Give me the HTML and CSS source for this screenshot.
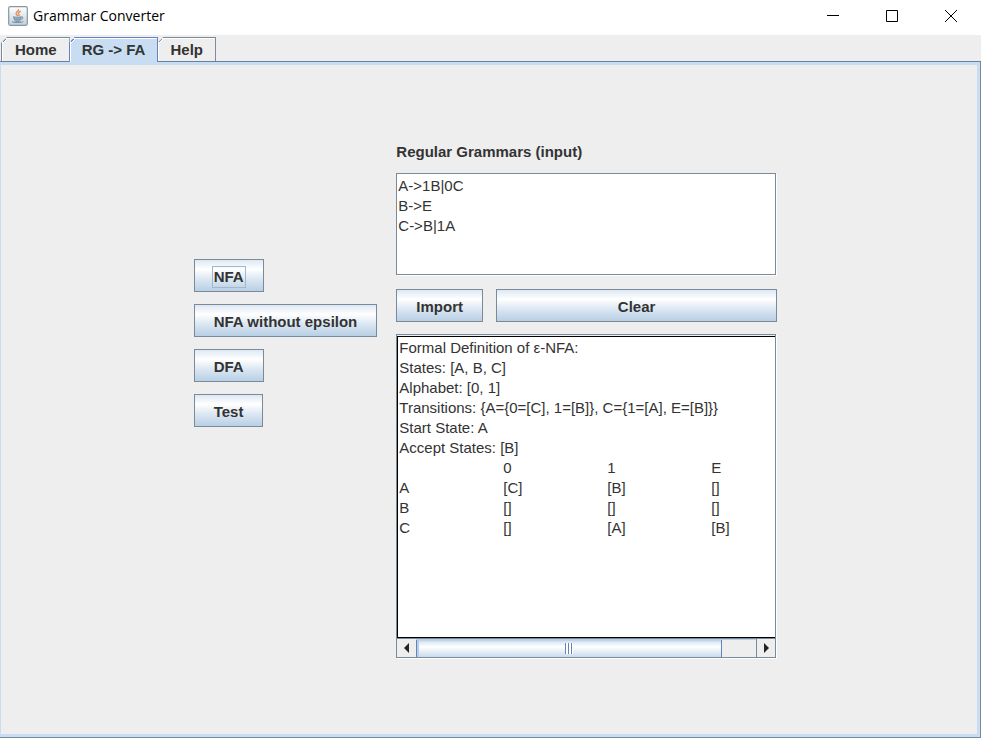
FILE: index.html
```html
<!DOCTYPE html>
<html lang="en">
<head>
<meta charset="utf-8">
<title>Grammar Converter</title>
<link rel="stylesheet" href="styles.css">
</head>
<body>
<div class="window">
  <header class="titlebar">
    <svg class="app-icon" viewBox="0 0 20 20" aria-hidden="true">
      <defs><linearGradient id="tile" x1="0" y1="0" x2="0" y2="1"><stop offset="0" stop-color="#fff"/><stop offset="1" stop-color="#c3d0da"/></linearGradient></defs>
      <rect x=".7" y=".7" width="18.6" height="18.6" rx="1.5" fill="url(#tile)" stroke="#8496a4" stroke-width="1.2"/>
      <path d="M10.500 3c1 2-3.500 3.200-2.300 5.100.4.800 1.300 1.300 1.400 2M12.800 5.200c-2.300 1-3 1.800-2 3 .6.700.2 1.300-.4 1.800" fill="none" stroke="#e58a52" stroke-width="1.300"/>
      <path d="M5.500 10.700c2 .7 5.600.7 7.600 0l-.6 2.800c-.2 1-6 1-6.300 0z" fill="#8da7bb" stroke="#6b8aa3" stroke-width=".8"/>
      <path d="M13.200 11c2.600-.6 2.300 2.200-.5 2.500M4.300 15.200c-1.500 1.800 10 1.800 11 .1M6.500 14.900c1.500.6 4.500.6 6 0" fill="none" stroke="#6b8aa3" stroke-width="1"/>
    </svg>
    <h1 class="title">Grammar Converter</h1>
    <div class="window-controls">
      <button class="window-button" type="button" aria-label="Minimize"><svg viewBox="0 0 12 12"><path d="M0 5.500h12"/></svg></button>
      <button class="window-button" type="button" aria-label="Maximize"><svg viewBox="0 0 12 12"><path d="M.5.5h11v11H.5z"/></svg></button>
      <button class="window-button" type="button" aria-label="Close"><svg viewBox="0 0 12 12"><path d="M0 0l12 12M12 0L0 12"/></svg></button>
    </div>
  </header>
  <nav class="tabs" role="tablist">
    <button class="tab" type="button" role="tab" aria-selected="false">Home</button>
    <button class="tab tab-active" type="button" role="tab" aria-selected="true">RG -&gt; FA</button>
    <button class="tab" type="button" role="tab" aria-selected="false">Help</button>
  </nav>
  <main class="pane">
    <div class="pane-body">
      <div class="actions">
        <button class="button button-focus" type="button"><span>NFA</span></button>
        <button class="button" type="button"><span>NFA without epsilon</span></button>
        <button class="button" type="button"><span>DFA</span></button>
        <button class="button" type="button"><span>Test</span></button>
      </div>
      <div class="workspace">
        <label class="label" for="grammar">Regular Grammars (input)</label>
        <div class="frame">
          <textarea class="text grammar" id="grammar" spellcheck="false">A-&gt;1B|0C
B-&gt;E
C-&gt;B|1A</textarea>
        </div>
        <div class="row">
          <button class="button" type="button"><span>Import</span></button>
          <button class="button button-wide" type="button"><span>Clear</span></button>
        </div>
        <div class="frame frame-output">
          <textarea class="text output" aria-label="Result" readonly spellcheck="false">Formal Definition of ε-NFA:
States: [A, B, C]
Alphabet: [0, 1]
Transitions: {A={0=[C], 1=[B]}, C={1=[A], E=[B]}}
Start State: A
Accept States: [B]
&#9;0&#9;1&#9;E
A&#9;[C]&#9;[B]&#9;[]
B&#9;[]&#9;[]&#9;[]
C&#9;[]&#9;[A]&#9;[B]</textarea>
          <div class="scrollbar">
            <button class="arrow arrow-left" type="button" aria-label="Scroll left"><svg viewBox="0 0 5 10"><path d="M5 0v10L0 5z"/></svg></button>
            <div class="track"><div class="thumb"><span class="grip"></span></div></div>
            <button class="arrow arrow-right" type="button" aria-label="Scroll right"><svg viewBox="0 0 5 10"><path d="M0 0v10l5-5z"/></svg></button>
          </div>
        </div>
      </div>
    </div>
  </main>
</div>
</body>
</html>
```
FILE: styles.css
```css
* { box-sizing: border-box; }

body {
  margin: 0;
  background: #eee;
  color: #333;
  font: 15px/20px "Liberation Sans", Arial, sans-serif;
}

button, textarea { font: inherit; color: inherit; margin: 0; }

.window {
  display: flex;
  flex-direction: column;
  min-height: 100vh;
}

.titlebar {
  display: flex;
  align-items: center;
  height: 35px;
  padding: 0 1px 3px 8px;
  background: #fff;
  color: #000;
}

.app-icon { width: 20px; height: 20px; margin-right: 5px; }

.title {
  margin: 0;
  font: 14px/20px "Open Sans", "Noto Sans", sans-serif;
}

.window-controls { display: flex; margin-left: auto; }

.window-button {
  display: flex;
  align-items: center;
  justify-content: center;
  width: 59px;
  height: 32px;
  padding: 0;
  border: 0;
  background: none;
}

.window-button svg {
  width: 12px;
  height: 12px;
  fill: none;
  stroke: #000;
}

.tabs {
  display: flex;
  align-items: flex-end;
  height: 27px;
  padding-left: 1px;
  border-bottom: 1px solid #6382a3;
}

.tab {
  height: 24px;
  padding: 0 12px 0 13px;
  border: 1px solid #7a8a99;
  border-width: 1px 1px 0 1px;
  background: linear-gradient(135deg, #7a8a99 5px, #fff 5px, #fff 6px, #eee 6px) border-box;
  clip-path: polygon(6px 0, 100% 0, 100% 100%, 0 100%, 0 6px);
  box-shadow: inset 1px 1px #fff;
  font-weight: bold;
  line-height: 23px;
}

.tab + .tab { padding-left: 12px; margin-left: -1px; }

.tab + .tab-active {
  z-index: 1;
  height: 25px;
  padding-bottom: 1px;
  margin-bottom: -1px;
  border-color: #6382bf;
  background: linear-gradient(135deg, #6382bf 5px, #fff 5px, #fff 6px, #c8ddf2 6px) border-box;
}

.pane {
  display: flex;
  flex: 1;
  border: 1px solid #7a8a99;
  border-width: 0 1px 1px 0;
}

.pane-body {
  display: flex;
  flex: 1;
  align-items: center;
  justify-content: center;
  gap: 19px;
  padding: 0 7px 0 0;
  border: 3px solid #c8ddf2;
  border-left-width: 1px;
}

.actions {
  display: flex;
  flex-direction: column;
  align-items: flex-start;
  gap: 12px;
  margin-bottom: 114px;
}

.button {
  height: 33px;
  padding: 3px 17px 0;
  border: 1px solid #7a8a99;
  background: linear-gradient(#dde8f3 0%, #fff 30%, #dde8f3 60%, #b8cfe5 100%);
  font-weight: bold;
}

.button span { display: block; padding: 0 1px; border: 1px solid transparent; }

.button-focus span { border-color: #a3b8cc; }

.button-wide { flex: 1; }

.workspace { width: 381px; }

.label { display: block; margin-bottom: 11px; font-weight: bold; }

.frame {
  display: flex;
  flex-direction: column;
  margin-right: 1px;
  border: 1px solid #7a8a99;
  box-shadow: 1px 1px #fff;
}

.text {
  display: block;
  width: 100%;
  padding: 2px 1px;
  border: 0;
  outline: 0;
  border-radius: 0;
  background: #fff;
  overflow: hidden;
  resize: none;
}

.grammar { height: 100px; }

.row { display: flex; gap: 13px; margin: 14px 0 12px; }

.output {
  height: 302px;
  padding-top: 1px;
  border: 1px solid #000;
  border-right: 0;
  white-space: pre;
  tab-size: 104px;
}

.frame-output { padding-top: 1px; }

.scrollbar { display: flex; height: 19px; border-top: 1px solid #7a8a99; }

.arrow {
  display: flex;
  align-items: center;
  justify-content: center;
  width: 19px;
  padding: 0;
  border: 0 solid #7a8a99;
  background: #eee;
}

.arrow-right { border-left-width: 1px; }

.arrow svg { width: 5px; height: 10px; fill: #222; }

.track { flex: 1; border-top: 1px solid #b8cfe5; }

.thumb {
  display: flex;
  align-items: center;
  justify-content: center;
  width: 90%;
  height: 17px;
  border: 1px solid #6382bf;
  border-width: 0 1px;
  background: linear-gradient(#b8cfe5 0%, #dde8f3 12%, #fff 40%, #c8dbee 100%);
  box-shadow: inset 2px 0 #b8cfe5;
}

.grip {
  width: 8px;
  height: 11px;
  background: repeating-linear-gradient(90deg, #6382bf 0 1px, #fff 1px 3px);
}
```
